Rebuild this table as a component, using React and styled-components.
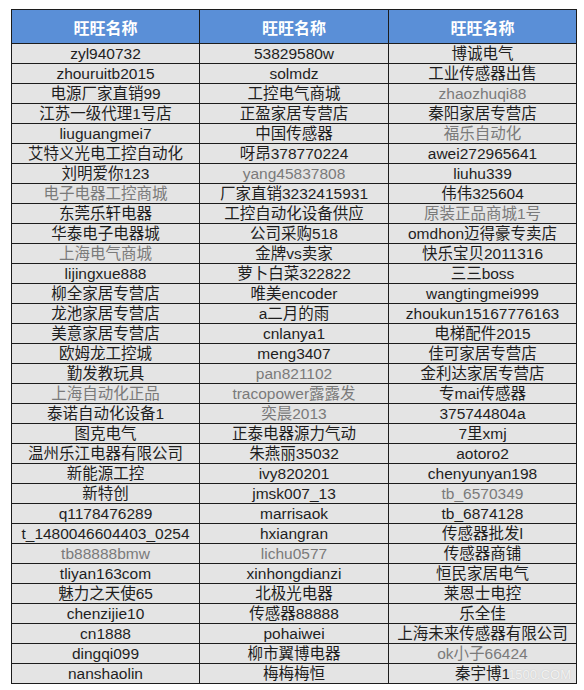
import React from 'react';
import styled, { createGlobalStyle } from 'styled-components';

const GlobalStyle = createGlobalStyle`
	html, body {
		margin: 0;
		padding: 0;
		background: #ffffff;
	}
	body {
		font-family: "Liberation Sans", Arial, "Noto Sans CJK SC", sans-serif;
	}
`;

const Page = styled.div`
	padding: 9px 0 0 11px;
	width: 584px;
	height: 690px;
	box-sizing: border-box;
`;

const Frame = styled.div`
	position: relative;
	width: 565px;
`;

const Table = styled.table`
	border-collapse: collapse;
	table-layout: fixed;
	width: 565px;
	border: 1px solid #1c1c1c;
`;

const HeadCell = styled.th`
	height: 33px;
	padding: 0;
	background: #5a8fd7;
	color: #ffffff;
	font-size: 16px;
	font-weight: bold;
	text-align: center;
	border: 1px solid #1c1c1c;
	font-family: "Noto Sans CJK SC", sans-serif;
`;

const Cell = styled.td`
	height: 19px;
	padding: 0;
	line-height: 19px;
	background: #e4e4e4;
	color: ${(p) => (p.$muted ? '#7a7a7a' : '#1e1e1e')};
	font-size: 15.5px;
	text-align: center;
	white-space: nowrap;
	overflow: hidden;
	border: 1px solid #1c1c1c;
`;

const Watermark = styled.span`
	position: absolute;
	right: 5px;
	bottom: 2px;
	font-size: 13px;
	color: rgba(255, 255, 255, 0.8);
	text-shadow: 0 0 1px rgba(150, 150, 150, 0.5);
	pointer-events: none;
`;

// * marks a cell drawn in the lighter grey
const rows = [
	['zyl940732', '53829580w', '博诚电气'],
	['zhouruitb2015', 'solmdz', '工业传感器出售'],
	['电源厂家直销99', '工控电气商城', '*zhaozhuqi88'],
	['江苏一级代理1号店', '正盈家居专营店', '秦阳家居专营店'],
	['liuguangmei7', '中国传感器', '*福乐自动化'],
	['艾特义光电工控自动化', '呀昂378770224', 'awei272965641'],
	['刘明爱你123', '*yang45837808', 'liuhu339'],
	['*电子电器工控商城', '厂家直销3232415931', '伟伟325604'],
	['东莞乐轩电器', '工控自动化设备供应', '*原装正品商城1号'],
	['华泰电子电器城', '公司采购518', 'omdhon迈得豪专卖店'],
	['*上海电气商城', '金牌vs卖家', '快乐宝贝2011316'],
	['lijingxue888', '萝卜白菜322822', '三三boss'],
	['柳全家居专营店', '唯美encoder', 'wangtingmei999'],
	['龙池家居专营店', 'a二月的雨', 'zhoukun15167776163'],
	['美意家居专营店', 'cnlanya1', '电梯配件2015'],
	['欧姆龙工控城', 'meng3407', '佳可家居专营店'],
	['勤发教玩具', '*pan821102', '金利达家居专营店'],
	['*上海自动化正品', '*tracopower露露发', '专mai传感器'],
	['泰诺自动化设备1', '*奕晨2013', '375744804a'],
	['图克电气', '正泰电器源力气动', '7里xmj'],
	['温州乐江电器有限公司', '朱燕丽35032', 'aotoro2'],
	['新能源工控', 'ivy820201', 'chenyunyan198'],
	['新特创', 'jmsk007_13', '*tb_6570349'],
	['q1178476289', 'marrisaok', 'tb_6874128'],
	['t_1480046604403_0254', 'hxiangran', '传感器批发l'],
	['*tb88888bmw', '*lichu0577', '传感器商铺'],
	['tliyan163com', 'xinhongdianzi', '恒民家居电气'],
	['魅力之天使65', '北极光电器', '莱恩士电控'],
	['chenzijie10', '传感器88888', '乐全佳'],
	['cn1888', 'pohaiwei', '上海未来传感器有限公司'],
	['dingqi099', '柳市翼博电器', '*ok小子66424'],
	['nanshaolin', '梅梅梅恒', '秦宇博1'],
];

export default function App() {
	return (
		<Page>
			<GlobalStyle />
			<Frame>
				<Table>
					<colgroup>
						<col style={{ width: 188 }} />
						<col style={{ width: 189 }} />
						<col style={{ width: 188 }} />
					</colgroup>
					<thead>
						<tr>
							<HeadCell>旺旺名称</HeadCell>
							<HeadCell>旺旺名称</HeadCell>
							<HeadCell>旺旺名称</HeadCell>
						</tr>
					</thead>
					<tbody>
						{rows.map((row, i) => (
							<tr key={i}>
								{row.map((text, j) => {
									const muted = text.startsWith('*');
									return (
										<Cell key={j} $muted={muted}>
											{muted ? text.slice(1) : text}
										</Cell>
									);
								})}
							</tr>
						))}
					</tbody>
				</Table>
				<Watermark>1500.COM</Watermark>
			</Frame>
		</Page>
	);
}
